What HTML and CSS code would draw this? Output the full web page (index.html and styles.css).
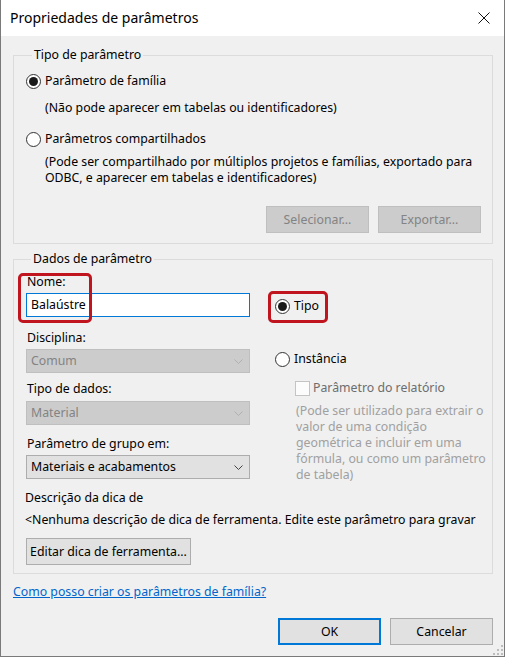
FILE: index.html
```html
<!DOCTYPE html>
<html lang="pt">
<head>
<meta charset="utf-8">
<title>Propriedades de parâmetros</title>
<link rel="stylesheet" href="styles.css">
</head>
<body>
<div class="window">
  <div class="titlebar">
    <span class="title">Propriedades de parâmetros</span>
    <svg class="close" width="12" height="12" viewBox="0 0 12 12"><path d="M0.5 0.5 L11.5 11.5 M11.5 0.5 L0.5 11.5" stroke="#111" stroke-width="1" fill="none"/></svg>
  </div>
  <div class="content">
    <fieldset class="group g1">
      <legend>Tipo de parâmetro</legend>
      <div class="radio-row first"><span class="radio checked"></span><span>Parâmetro de família</span></div>
      <p class="desc d1">(Não pode aparecer em tabelas ou identificadores)</p>
      <div class="radio-row second"><span class="radio"></span><span>Parâmetros compartilhados</span></div>
      <p class="desc d2">(Pode ser compartilhado por múltiplos projetos e famílias, exportado para<br>ODBC, e aparecer em tabelas e identificadores)</p>
      <div class="btn-row">
        <button class="btn disabled">Selecionar...</button>
        <button class="btn disabled">Exportar...</button>
      </div>
    </fieldset>

    <fieldset class="group g2">
      <legend>Dados de parâmetro</legend>
      <div class="cols">
        <div class="left">
          <div class="field name-field">
            <div class="label">Nome:</div>
            <div class="input">Balaústre</div>
            <span class="highlight hl-name"></span>
          </div>
          <div class="label l-disc">Disciplina:</div>
          <div class="combo disabled"><span>Comum</span><svg class="chev" width="9" height="5" viewBox="0 0 9 5"><path d="M0.5 0.5 L4.5 4.5 L8.5 0.5" fill="none" stroke="currentColor" stroke-width="1"/></svg></div>
          <div class="label l-tipo">Tipo de dados:</div>
          <div class="combo disabled c-tipo"><span>Material</span><svg class="chev" width="9" height="5" viewBox="0 0 9 5"><path d="M0.5 0.5 L4.5 4.5 L8.5 0.5" fill="none" stroke="currentColor" stroke-width="1"/></svg></div>
          <div class="label l-grupo">Parâmetro de grupo em:</div>
          <div class="combo"><span>Materiais e acabamentos</span><svg class="chev" width="9" height="5" viewBox="0 0 9 5"><path d="M0.5 0.5 L4.5 4.5 L8.5 0.5" fill="none" stroke="currentColor" stroke-width="1"/></svg></div>
        </div>
        <div class="right">
          <div class="radio-row r-tipo"><span class="radio checked"></span><span>Tipo</span><span class="highlight hl-tipo"></span></div>
          <div class="radio-row r-inst"><span class="radio"></span><span>Instância</span></div>
          <div class="check-row"><span class="checkbox"></span><span>Parâmetro do relatório</span></div>
          <p class="gray-desc">(Pode ser utilizado para extrair o<br>valor de uma condição<br>geométrica e incluir em uma<br>fórmula, ou como um parâmetro<br>de tabela)</p>
        </div>
      </div>
      <div class="tip">
        <div class="tip-title">Descrição da dica de</div>
        <div class="tip-text">&lt;Nenhuma descrição de dica de ferramenta. Edite este parâmetro para gravar</div>
        <button class="btn edit">Editar dica de ferramenta...</button>
      </div>
    </fieldset>

    <a class="help" href="#">Como posso criar os parâmetros de família?</a>

    <div class="footer">
      <button class="btn ok">OK</button>
      <button class="btn">Cancelar</button>
    </div>
  </div>
  <svg class="grip" width="10" height="10" viewBox="0 0 10 10">
    <rect x="8" y="0" width="2" height="2" fill="#bcbcbc"/>
    <rect x="4" y="4" width="2" height="2" fill="#bcbcbc"/>
    <rect x="8" y="4" width="2" height="2" fill="#bcbcbc"/>
    <rect x="0" y="8" width="2" height="2" fill="#bcbcbc"/>
    <rect x="4" y="8" width="2" height="2" fill="#bcbcbc"/>
    <rect x="8" y="8" width="2" height="2" fill="#bcbcbc"/>
  </svg>
</div>
</body>
</html>
```

FILE: styles.css
```css
* { box-sizing: border-box; }
html, body { margin: 0; padding: 0; background: #ffffff; }
body {
  font-family: "Noto Sans", "Open Sans", sans-serif;
  font-size: 12.3px;
  line-height: 16px;
  color: #000;
}
.window {
  position: relative;
  width: 505px;
  height: 657px;
  border-left: 1px solid #7a7a7a;
  border-right: 1px solid #7a7a7a;
  border-bottom: 1px solid #7a7a7a;
  background: #f0f0f0;
  display: flex;
  flex-direction: column;
}
.titlebar {
  height: 36px;
  background: #ffffff;
  display: flex;
  align-items: center;
  justify-content: space-between;
  padding: 0 14px 0 9px;
  flex: none;
}
.title { font-size: 14px; line-height: 20px; color: #000; }
.close { display: block; }
.content {
  padding: 11px 11px 0 12px;
  flex: 1;
}
.group {
  margin: 0;
  padding: 0;
  border: 1px solid #dcdcdc;
  min-width: 0;
  width: 480px;
}
.group legend {
  padding: 0 2px;
  margin-left: 6px;
  line-height: 16px;
}
.g1 { padding: 0 11px 10px 12px; }
.radio-row {
  display: flex;
  align-items: center;
  height: 16px;
  gap: 4px;
  position: relative;
}
.radio {
  width: 15px;
  height: 15px;
  border-radius: 50%;
  border: 1px solid #333;
  background: #fff;
  flex: none;
  position: relative;
}
.radio.checked::after {
  content: "";
  position: absolute;
  left: 2px; top: 2px;
  width: 9px; height: 9px;
  border-radius: 50%;
  background: #1a1a1a;
}
.first { margin-top: 10px; }
.desc { margin: 0; padding-left: 19px; }
.d1 { margin-top: 11px; }
.second { margin-top: 15px; }
.d2 { margin-top: 7px; }
.btn-row {
  display: flex;
  justify-content: flex-end;
  gap: 9px;
  margin-top: 20px;
}
.btn {
  font-family: inherit;
  font-size: inherit;
  height: 27px;
  width: 103px;
  padding: 0;
  background: #e1e1e1;
  border: 1px solid #adadad;
  color: #000;
  border-radius: 0;
}
.btn.disabled { background: #cccccc; border-color: #bfbfbf; color: #838383; }
.g2 {
  margin-top: 7px;
  padding: 0 11px 8px 11px;
  position: relative;
}
.cols { display: flex; }
.left { width: 224px; flex: none; margin-left: 1px; }
.right { margin-left: 25px; flex: 1; white-space: nowrap; }
.field { position: relative; }
.label { padding-left: 1px; height: 16px; }
.name-field { margin-top: 7px; }
.input {
  margin-top: 3px;
  height: 24px;
  background: #fff;
  border: 1px solid #0078d7;
  padding: 0 4px;
  line-height: 22px;
}
.l-disc { margin-top: 13px; }
.l-tipo { margin-top: 8px; }
.l-grupo { margin-top: 11px; }
.combo {
  margin-top: 3px;
  height: 24px;
  background: #e1e1e1;
  border: 1px solid #adadad;
  padding: 0 6px 0 4px;
  display: flex;
  align-items: center;
  justify-content: space-between;
  color: #000;
}
.c-tipo { margin-top: 4px; }
.combo.disabled { background: #cccccc; border-color: #bfbfbf; color: #838383; }
.chev { display: block; color: #444; margin-right: 0; }
.combo.disabled .chev { color: #b0b0b0; }
.highlight {
  position: absolute;
  border: 3px solid #c0151f;
  border-radius: 5px;
  pointer-events: none;
}
.hl-name { left: -8px; top: -1px; width: 74px; height: 50px; }
.hl-tipo { left: -7px; top: -7px; width: 60px; height: 32px; }
.r-tipo { margin-top: 31px; }
.r-inst { margin-top: 37px; }
.check-row {
  display: flex;
  align-items: center;
  gap: 3px;
  margin-top: 13px;
  margin-left: 20px;
  color: #6d6d6d;
  height: 16px;
}
.checkbox {
  width: 15px; height: 15px;
  border: 1px solid #c4c4c4;
  background: #fcfcfc;
  flex: none;
}
.gray-desc {
  margin: 7px 0 0 21px;
  color: #a0a0a0;
}
.tip { margin-top: 7px; }
.tip-text { margin-top: 6px; }
.edit { margin-top: 10px; width: 165px; margin-left: 1px; }
.help {
  display: block;
  margin-top: 10px;
  color: #0066cc;
  text-decoration: underline;
  width: max-content;
}
.footer {
  display: flex;
  justify-content: flex-end;
  gap: 9px;
  margin-top: 18px;
  width: 480px;
}
.ok { border: 2px solid #0078d7; }
.grip { position: absolute; right: 1px; bottom: 1px; }
```
